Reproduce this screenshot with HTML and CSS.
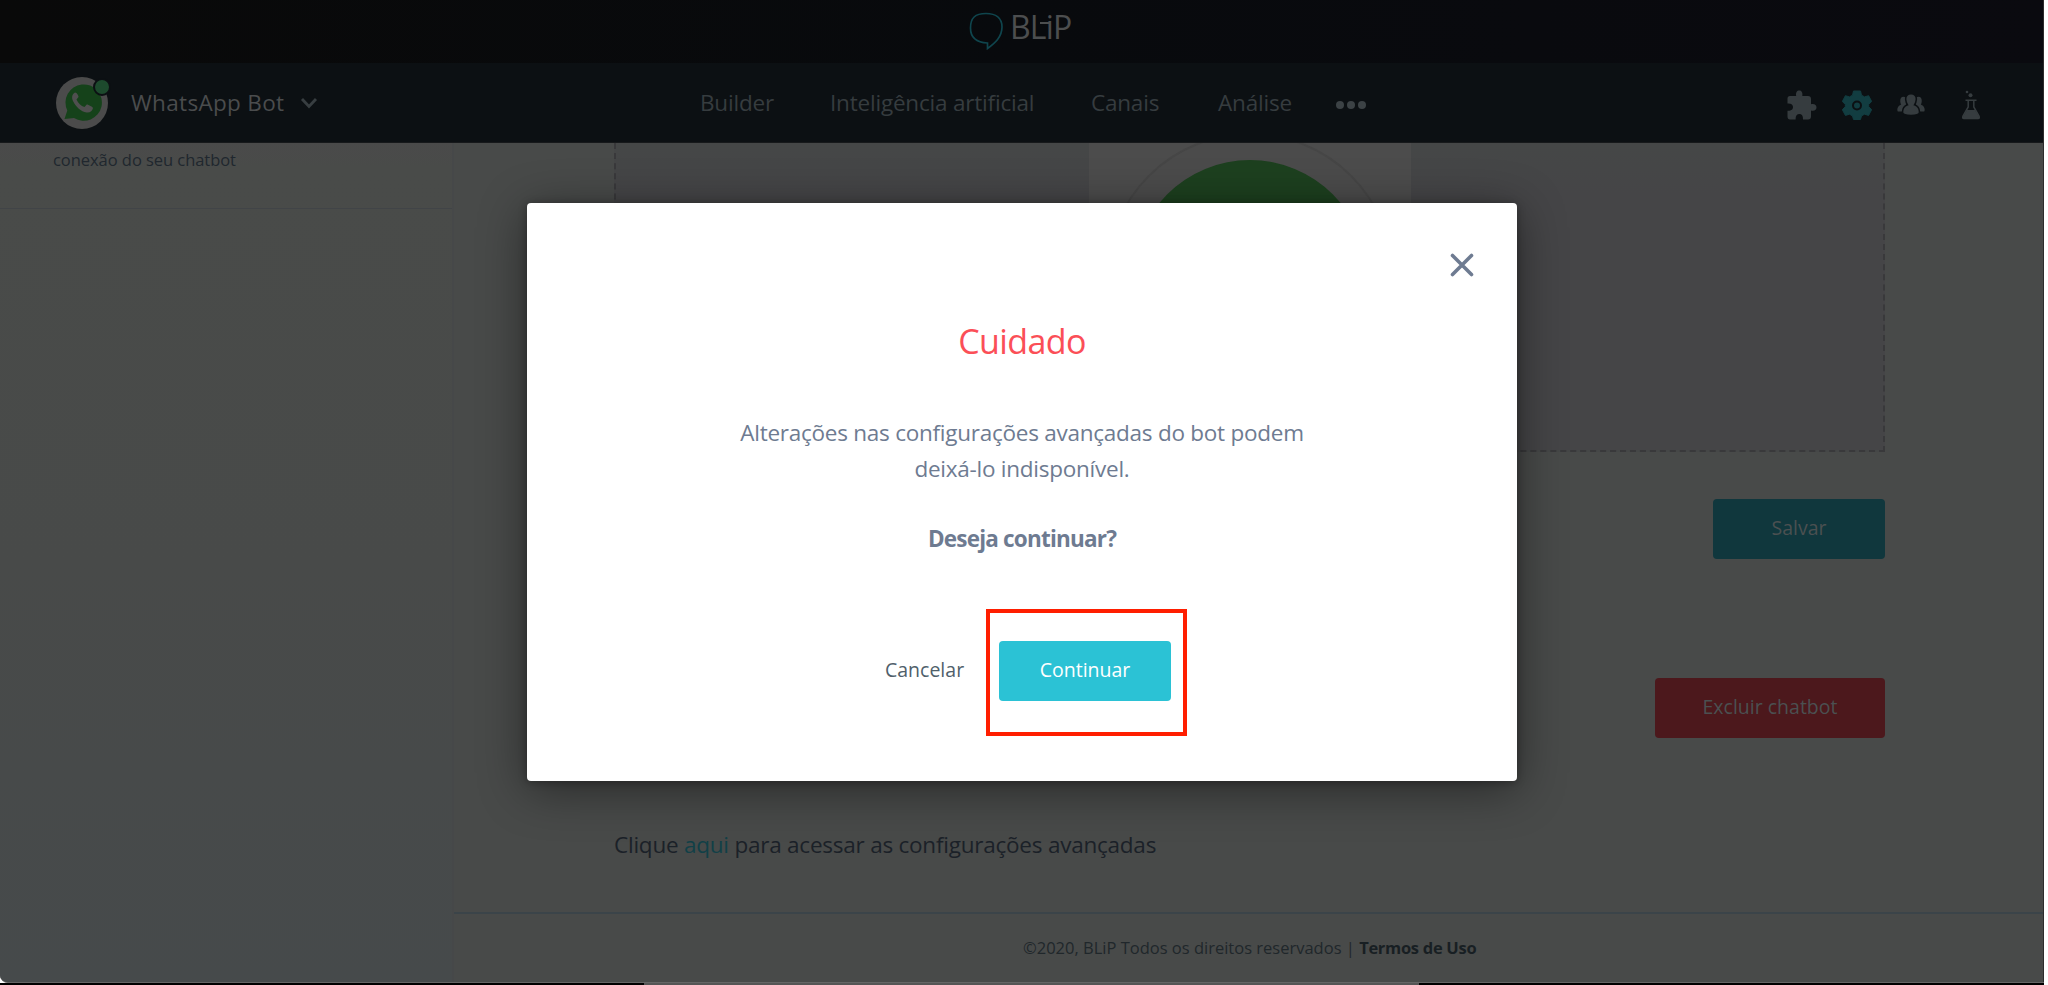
FILE: index.html
```html
<!DOCTYPE html>
<html lang="pt-BR">
<head>
<meta charset="utf-8">
<title>BLiP</title>
<link rel="stylesheet" href="styles.css">
</head>
<body>
<div class="window">
  <header class="brandbar">
    <svg class="brand-icon" width="34" height="38" viewBox="0 0 34 38"><path d="M17 1.500C6 1.500 1.500 6 1.500 16s6 14.500 17 15v5.500C26 31 33 25 33 15 33 6 27 1.500 17 1.500z" fill="none" stroke="#0f454d" stroke-width="1.700"/></svg>
    <span class="brand-name">BL<span class="brand-i">i<i class="brand-bar"></i></span>P</span>
  </header>
  <nav class="nav">
    <div class="bot">
      <div class="avatar">
        <svg width="52" height="52" viewBox="0 0 52 52"><circle cx="26" cy="26" r="26" fill="#4b4b4b"/><path d="M8.500 42l2.800-8.500A18.200 18.200 0 1 1 18 41z" fill="#15421a"/><path d="M19 15.500c-3 1.500-3.600 5-2 8.500 3 6 8 10.500 13.500 11.500 3.500.500 6-1.500 6.500-4.500.2-1-5.500-4-6.300-3.500l-2.200 2.500c-3.500-1-6.500-4-8-7.500l2-2.500c.3-.8-1.500-4.500-3.500-4.500z" fill="#4f4f4f"/></svg>
        <span class="status"></span>
      </div>
      <span class="bot-name">WhatsApp Bot</span>
      <svg class="chevron" width="18" height="12" viewBox="0 0 18 12"><path d="M2 2l7 7.500L16 2" fill="none" stroke="#383e41" stroke-width="2.800"/></svg>
    </div>
    <div class="menu">
      <a class="m1">Builder</a><a class="m2">Inteligência artificial</a><a class="m3">Canais</a><a class="m4">Análise</a>
      <span class="dots"><i></i><i></i><i></i></span>
    </div>
    <div class="tools">
      <svg width="30" height="30" viewBox="0 0 30 30"><path d="M3 6h6.200C8.500 2.500 10 .5 12.200.5S16 2.500 15.300 6H21q3 0 3 3v5.200c3.500-.8 5.500.8 5.500 3.200s-2 3.800-5.500 3v6q0 3-3 3h-5c.2-3.700-1.300-5.500-3.600-5.500s-4 1.800-3.800 5.500H3q-2.500 0-2.500-3v-5.600c4 .2 5.500-1.400 5.500-3.700s-1.500-3.800-5.500-3.600V8.500Q.5 6 3 6z" fill="#363c3f"/></svg>
      <svg class="gear" width="30" height="30" viewBox="0 0 30 30"><path d="M11.500 1h7l1 4.200 3 1.700 4.100-1.200 3.100 5.800-3 2.800v2.500l3 2.800-3.100 5.800-4.100-1.200-3 1.700-1 3.600h-7l-1-3.600-3-1.700-4.100 1.200L.3 19.600l3-2.800v-2.500l-3-2.800 3.100-5.800 4.100 1.200 3-1.700z" fill="#123d41" stroke="#123d41" stroke-linejoin="round"/><circle cx="15" cy="15.500" r="4" fill="none" stroke="#0c1013" stroke-width="2"/></svg>
      <svg class="people" width="28" height="22" viewBox="0 0 28 22"><g fill="#363c3f"><path d="M6.500 2.800c2 0 2.800 1 2.700 2.600l.3 4.300-1.500 3-2.500 4.800H.8C-.3 16 .3 12 4.200 10.600 2.800 8.500 2.500 2.800 6.500 2.800z"/><path d="M21.500 2.800c-2 0-2.800 1-2.700 2.600l-.3 4.300 1.500 3 2.500 4.800h4.700c1.100-1.500.5-5.500-3.400-6.900 1.400-2.100 1.700-7.800-2.300-7.800z"/></g><path d="M14-.2c3.800 0 5.600 2.500 5.300 5.800-.2 2.800-1 4-1.800 5.200 3.600 1.200 5 3.500 5 7.500 0 4.200-17 4.200-17 0 0-4 1.400-6.300 5-7.500C9.700 9.600 8.900 8.400 8.700 5.600 8.400 2.300 10.200-.2 14-.2z" fill="#363c3f" stroke="#0c1013" stroke-width="1.500"/></svg>
      <svg class="flask" width="20" height="30" viewBox="0 0 20 30"><circle cx="6" cy="2" r="1.300" fill="#363c3f"/><circle cx="9.500" cy="5.300" r="2" fill="#363c3f"/><path d="M4.500 10.300h11M7.200 10v7L2 26q-1 2.500 1 2.500h14q2 0 1-2.500l-5.200-9v-7" fill="none" stroke="#363c3f" stroke-width="1.500"/><path d="M6 20h8l4.500 7.500-1.500 1.500H3l-1.500-1.500z" fill="#363c3f"/></svg>
    </div>
  </nav>
  <div class="body">
    <aside class="sidebar"><p class="side-text">conexão do seu chatbot</p></aside>
    <main class="main">
      <section class="dropzone">
        <svg width="322" height="200" viewBox="0 0 322 200"><path d="M0 0h322v200H0z" fill="#4c4c4c"/><circle cx="161" cy="134" r="143" fill="#4b4b4b" stroke="#464646" stroke-width="2"/><circle cx="161" cy="134" r="117" fill="#1d401f"/></svg>
      </section>
      <div class="row save"><button class="btn teal">Salvar</button></div>
      <div class="row delete"><button class="btn red">Excluir chatbot</button></div>
      <p class="advanced">Clique <a>aqui</a> para acessar as configurações avançadas</p>
      <footer class="footer"><span>©2020, BLiP Todos os direitos reservados | </span><b>Termos de Uso</b></footer>
    </main>
  </div>
</div>
<div class="under"></div>
<div class="modal">
  <svg class="close" width="24" height="24" viewBox="0 0 24 24"><path d="M2.500 2.500l19 19m0-19l-19 19" stroke="#6e7b91" stroke-width="3.600" stroke-linecap="round"/></svg>
  <h1>Cuidado</h1>
  <p class="msg"><span class="l1">Alterações nas configurações avançadas do bot podem</span><br><span class="l2">deixá-lo indisponível.</span></p>
  <p class="ask">Deseja continuar?</p>
  <div class="actions"><span class="cancel">Cancelar</span><div class="mark"><button class="continue">Continuar</button></div></div>
</div>
</body>
</html>
```
FILE: styles.css
```css
* { box-sizing: border-box; }
body { margin: 0; width: 2048px; height: 985px; overflow: hidden; position: relative; background: #fff; font-family: "Open Sans", "Noto Sans", sans-serif; }
h1, p { margin: 0; }
button { border: 0; padding: 0 0 3px; font-family: inherit; }
svg { display: block; flex: none; }
span, a, p, b { white-space: nowrap; }
.window { width: 2044px; height: 983px; background: #484a49; border-right: 1px solid #2c2c2c; border-bottom: 1px solid #656565; border-radius: 0 0 0 8px; overflow: hidden; display: flex; flex-direction: column; }
.under { height: 2px; background: linear-gradient(90deg, #000 644px, #555 644px 1419px, #000 1419px 2044px, #fff 2044px); }
.brandbar { height: 63px; flex: none; background: linear-gradient(90deg, #090909, #080a0d 50%, #0a0a0f); display: flex; padding: 12px 0 0 969px; gap: 7px; }
.brand-name { color: #4c4e4f; font-size: 32px; line-height: 30px; font-weight: 400; letter-spacing: -.8px; }
.brand-i { position: relative; }
.brand-bar { position: absolute; left: -6px; top: 17px; width: 10px; height: 2px; background: #4c4e4f; }
.nav { height: 80px; flex: none; background: #0c1013; border-bottom: 1px solid #17191b; display: flex; padding-left: 56px; }
.bot { width: 644px; display: flex; align-items: center; padding-top: 1px; }
.avatar { position: relative; width: 52px; height: 52px; }
.status { position: absolute; left: 37px; top: 1px; width: 18px; height: 18px; border-radius: 50%; background: #1d4a2d; border: 2px solid #0c1013; }
.bot-name { margin-left: 23px; width: 154px; padding-bottom: 2px; font-size: 22.500px; letter-spacing: .32px; color: #4a4c4d; }
.chevron { margin-left: 15px; }
.menu { width: 1087px; display: flex; align-items: center; color: #363c3f; font-size: 22.500px; letter-spacing: -.2px; }
.menu a { padding-bottom: 1px; }
.m1 { width: 130px; } .m2 { width: 261px; } .m3 { width: 127px; } .m4 { width: 118px; }
.dots { display: flex; gap: 3px; padding-top: 4px; }
.dots i { width: 8px; height: 8px; border-radius: 50%; background: #3c4245; }
.tools { display: flex; align-items: flex-start; padding-top: 27px; }
.gear { margin-left: 25px; }
.people { margin: 4px 0 0 25px; }
.flask { margin-left: 36px; }
.body { flex: 1; display: flex; min-height: 0; }
.sidebar { width: 454px; flex: none; background: linear-gradient(#4a4a4a, #494b49 25px, #484a49 50%, #464a4b); border-right: 2px solid #464849; }
.side-text { height: 66px; padding: 3px 0 0 53px; border-bottom: 1px solid #414447; font-size: 16.500px; line-height: 28px; letter-spacing: -.05px; color: #20272e; }
.main { width: 1589px; display: flex; flex-direction: column; }
.dropzone { width: 1271px; height: 309px; margin-left: 160px; border: 2px dashed #39393b; border-top: 0; background: linear-gradient(#454747, #454547 50px); display: flex; justify-content: center; overflow: hidden; }
.row { display: flex; justify-content: flex-end; padding-right: 158px; }
.save { margin-top: 47px; } .delete { margin-top: 119px; }
.btn { height: 60px; border-radius: 4px; font-size: 19.500px; color: #4b5051; }
.teal { width: 172px; background: #10373d; }
.red { width: 230px; background: #4c181c; }
.advanced { margin: 91px 0 0 160px; font-size: 22.500px; line-height: 32px; letter-spacing: -.23px; color: #1b2128; }
.advanced a { color: #114047; }
.footer { margin-top: 51px; border-top: 2px solid #3b4449; flex: 1; padding: 20px 0 0 569px; font-size: 16.500px; line-height: 28px; color: #20272b; white-space: pre; }
.footer span { white-space: pre; }
.footer b { color: #181f23; letter-spacing: -.3px; }
.modal { position: absolute; left: 527px; top: 203px; width: 990px; height: 578px; background: #fff; border-radius: 4px; box-shadow: 0 8px 48px rgba(0,0,0,.45), 0 1px 8px rgba(0,0,0,.3); display: flex; flex-direction: column; align-items: center; padding-top: 50px; }
.close { align-self: flex-end; margin-right: 43px; }
h1 { margin-top: 40px; color: #fb4f57; font-size: 34px; line-height: 48px; font-weight: 400; letter-spacing: -.6px; }
.msg { margin-top: 50px; color: #6e7b91; font-size: 22.500px; line-height: 36px; letter-spacing: -.25px; text-align: center; }
.ask { margin-top: 34px; color: #6e7b91; font-size: 22.500px; line-height: 36px; font-weight: 700; letter-spacing: -.8px; }
.actions { width: 990px; padding-left: 358px; margin-top: 52px; display: flex; align-items: flex-start; }
.cancel { width: 101px; margin-top: 47px; font-size: 19.500px; line-height: 28px; color: #505f6b; font-weight: 500; }
.mark { width: 201px; height: 127px; border: 4px solid #ff1e00; padding: 28px 0 0 9px; }
.continue { width: 172px; height: 60px; border-radius: 4px; background: #2bc2d5; color: #fff; font-size: 19.500px; font-weight: 500; }
```
